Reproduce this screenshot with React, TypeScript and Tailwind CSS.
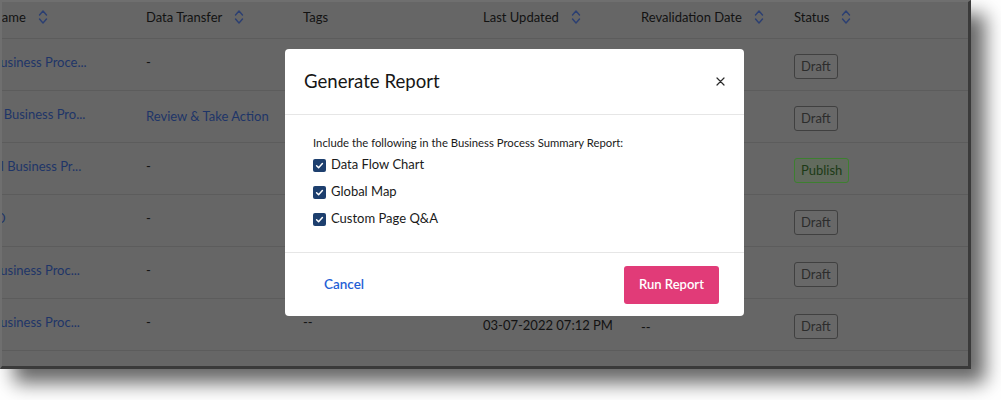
import React from "react";

type Row = {
  name: string;
  transfer: string;
  link?: boolean;
  tags: string;
  updated: string;
  reval: string;
  status: "Draft" | "Publish";
};

const rows: Row[] = [
  { name: "Business Proce...", transfer: "-", tags: "--", updated: "03-07-2022 07:12 PM", reval: "--", status: "Draft" },
  { name: "A Business Pro...", transfer: "Review & Take Action", link: true, tags: "--", updated: "03-07-2022 07:12 PM", reval: "--", status: "Draft" },
  { name: "Al Business Pr...", transfer: "-", tags: "--", updated: "03-07-2022 07:12 PM", reval: "--", status: "Publish" },
  { name: "ID", transfer: "-", tags: "--", updated: "03-07-2022 07:12 PM", reval: "--", status: "Draft" },
  { name: "Business Proc...", transfer: "-", tags: "--", updated: "03-07-2022 07:12 PM", reval: "--", status: "Draft" },
  { name: "Business Proc...", transfer: "-", tags: "--", updated: "03-07-2022 07:12 PM", reval: "--", status: "Draft" },
];

function SortIcon() {
  return (
    <svg width="10" height="16" viewBox="0 0 10 16" fill="none" stroke="#2b3f72" strokeWidth="1.4" strokeLinecap="round" strokeLinejoin="round">
      <path d="M1.5 6 L5 2 L8.5 6" />
      <path d="M1.5 10 L5 14 L8.5 10" />
    </svg>
  );
}

function Check({ label }: { label: string }) {
  return (
    <label className="flex h-[18px] items-center gap-[5px]">
      <span className="flex h-[13px] w-[13px] items-center justify-center rounded-[2px] bg-[#1d3f6e]">
        <svg width="13" height="13" viewBox="0 0 13 13" fill="none" stroke="white" strokeWidth="1.5" strokeLinecap="round" strokeLinejoin="round">
          <path d="M3.6 6.8 L5.6 8.7 L9.4 4.6" />
        </svg>
      </span>
      <span className="text-[13px] text-[#1a1a1a]">{label}</span>
    </label>
  );
}

function HeaderCell({ label, w, sort = true }: { label: string; w: string; sort?: boolean }) {
  return (
    <div className={`${w} flex shrink-0 items-center gap-3 pt-[6px]`}>
      <span className="leading-[18px]">{label}</span>
      {sort && <SortIcon />}
    </div>
  );
}

export default function App() {
  return (
    <div className="h-[400px] w-[1001px] bg-white font-[Lato,sans-serif]">
      <div className="relative h-[369px] w-[971px] overflow-hidden border-t-2 border-l-2 border-r-[3px] border-b-[3px] border-t-[#6f6f6f] border-l-[#6f6f6f] border-r-[#3a3a3a] border-b-[#3a3a3a] bg-[#666666] shadow-[14px_14px_18px_rgba(0,0,0,0.6)]">
        <div className="-ml-[10px] text-[13px] text-[#121212]">
          <div className="flex h-[37px] items-start border-b border-[#5c5c5c]">
            <HeaderCell label="Name" w="w-[154px]" />
            <HeaderCell label="Data Transfer" w="w-[157px]" />
            <HeaderCell label="Tags" w="w-[180px]" sort={false} />
            <HeaderCell label="Last Updated" w="w-[158px]" />
            <HeaderCell label="Revalidation Date" w="w-[153px]" />
            <HeaderCell label="Status" w="w-[160px]" />
          </div>
          {rows.map((r, i) => (
            <div key={i} className="flex h-[52px] items-start border-b border-[#5c5c5c] pt-[14px] leading-[18px]">
              <div className="w-[154px] shrink-0 text-[#1e3568]">{r.name}</div>
              <div className={`w-[157px] shrink-0 ${r.link ? "pt-[2px] text-[#1e3568]" : "text-[#111]"}`}>{r.transfer}</div>
              <div className="w-[180px] shrink-0">{r.tags}</div>
              <div className="w-[158px] shrink-0 pt-[3px]">{r.updated}</div>
              <div className="w-[153px] shrink-0 pt-[5px]">{r.reval}</div>
              <div className="w-[160px] shrink-0 pt-[1px]">
                {r.status === "Draft" ? (
                  <span className="inline-block rounded-[3px] border border-[#404040] bg-[#686868] px-[6px] py-[3px] leading-[17px] text-[#2c2c2c]">
                    Draft
                  </span>
                ) : (
                  <span className="inline-block rounded-[3px] border border-[#3d7f30] bg-[#626b5e] px-[6px] py-[3px] leading-[17px] text-[#1c3a17]">
                    Publish
                  </span>
                )}
              </div>
            </div>
          ))}
        </div>

        <div className="absolute left-[283px] top-[47px] flex h-[267px] w-[459px] flex-col rounded-[4px] bg-white">
          <div className="flex h-[66px] shrink-0 items-center justify-between border-b border-[#e6e6e6] pl-[19px] pr-[19px]">
            <h2 className="text-[18.6px] text-[#161616]">Generate Report</h2>
            <button className="flex h-[9px] w-[9px] items-center justify-center">
              <svg width="9" height="9" viewBox="0 0 9 9" stroke="#2a2a2a" strokeWidth="1.2" strokeLinecap="round">
                <path d="M1 1 L8 8 M8 1 L1 8" />
              </svg>
            </button>
          </div>
          <div className="h-[137px] shrink-0 pl-[28px] pt-[20px]">
            <p className="text-[11.3px] leading-[16px] text-[#1a1a1a]">
              Include the following in the Business Process Summary Report:
            </p>
            <div className="mt-[5px] flex flex-col gap-[9px]">
              <Check label="Data Flow Chart" />
              <Check label="Global Map" />
              <Check label="Custom Page Q&A" />
            </div>
          </div>
          <div className="flex flex-1 items-center justify-between border-t border-[#e6e6e6] pl-[19px] pr-[25px]">
            <button className="px-[20px] text-[13.5px] font-semibold text-[#1f5fd6]">Cancel</button>
            <button className="h-[38px] w-[95px] rounded-[3px] bg-[#e13b78] text-[13px] font-semibold text-white">
              Run Report
            </button>
          </div>
        </div>
      </div>
    </div>
  );
}
